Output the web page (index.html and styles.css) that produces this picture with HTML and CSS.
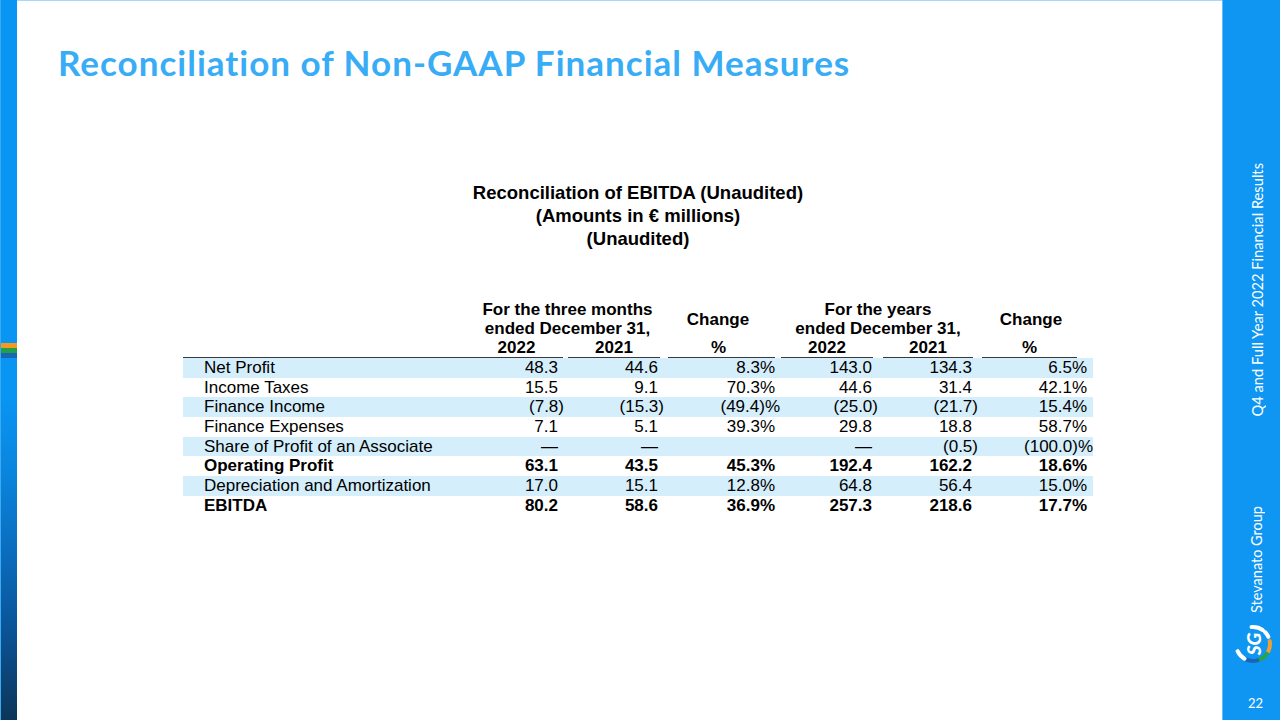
FILE: index.html
```html
<!DOCTYPE html>
<html lang="en">
<head>
<meta charset="utf-8">
<title>Reconciliation of Non-GAAP Financial Measures</title>
<link rel="stylesheet" href="styles.css">
</head>
<body>
<div class="slide">
  <aside class="leftbar">
    <div class="stripe orange"></div>
    <div class="stripe green"></div>
    <div class="stripe blue"></div>
  </aside>
  <main class="main">
    <h1 class="title">Reconciliation of Non-GAAP Financial Measures</h1>
    <section class="report">
      <div class="caption">
        <div>Reconciliation of EBITDA (Unaudited)</div>
        <div>(Amounts in € millions)</div>
        <div>(Unaudited)</div>
      </div>
      <div class="thead">
        <div class="grp g1">For the three months<br>ended December 31,</div>
        <div class="chg c1">Change</div>
        <div class="grp g2">For the years<br>ended December 31,</div>
        <div class="chg c2">Change</div>
        <div class="h3 lab"></div>
        <div class="h3 a">2022</div>
        <div class="h3 b">2021</div>
        <div class="h3 c">%</div>
        <div class="h3 d">2022</div>
        <div class="h3 e">2021</div>
        <div class="h3 f">%</div>
      </div>
      <div class="row shade"><span class="lab">Net Profit</span><span>48.3</span><span>44.6</span><span class="p">8.3%</span><span>143.0</span><span>134.3</span><span>6.5%</span></div>
      <div class="row"><span class="lab">Income Taxes</span><span>15.5</span><span>9.1</span><span class="p">70.3%</span><span>44.6</span><span>31.4</span><span>42.1%</span></div>
      <div class="row shade"><span class="lab">Finance Income</span><span><i class="neg">(7.8)</i></span><span><i class="neg">(15.3)</i></span><span class="p"><i class="neg">(49.4)%</i></span><span><i class="neg">(25.0)</i></span><span><i class="neg">(21.7)</i></span><span>15.4%</span></div>
      <div class="row"><span class="lab">Finance Expenses</span><span>7.1</span><span>5.1</span><span class="p">39.3%</span><span>29.8</span><span>18.8</span><span>58.7%</span></div>
      <div class="row shade"><span class="lab">Share of Profit of an Associate</span><span>—</span><span>—</span><span class="p"></span><span>—</span><span><i class="neg">(0.5)</i></span><span><i class="neg">(100.0)%</i></span></div>
      <div class="row bold"><span class="lab">Operating Profit</span><span>63.1</span><span>43.5</span><span class="p">45.3%</span><span>192.4</span><span>162.2</span><span>18.6%</span></div>
      <div class="row shade"><span class="lab">Depreciation and Amortization</span><span>17.0</span><span>15.1</span><span class="p">12.8%</span><span>64.8</span><span>56.4</span><span>15.0%</span></div>
      <div class="row bold"><span class="lab">EBITDA</span><span>80.2</span><span>58.6</span><span class="p">36.9%</span><span>257.3</span><span>218.6</span><span>17.7%</span></div>
    </section>
  </main>
  <aside class="rightbar">
    <div class="vtext event">Q4 and Full Year 2022 Financial Results</div>
    <div class="vtext brand">Stevanato Group</div>
    <svg class="logo" viewBox="0 0 38 44" width="38" height="44" aria-label="SG logo">
      <g fill="none" stroke-width="4" stroke-linecap="round">
        <path d="M16.5 4.1 A17 17 0 0 1 27.8 7.1" stroke="#ffffff"/>
        <path d="M30.0 9.0 A17 17 0 0 1 33.4 13.8" stroke="#ffffff"/>
        <path d="M34.7 18.1 A17 17 0 0 1 33.4 28.2" stroke="#f0a030"/>
        <path d="M31.9 30.8 A17 17 0 0 1 23.8 37.0" stroke="#2aa348"/>
        <path d="M22.4 37.4 A17 17 0 0 1 10.8 36.4" stroke="#1c64b8"/>
        <path d="M9.5 35.7 A17 17 0 0 1 2.6 28.2" stroke="#ffffff"/>
      </g>
      <text x="18" y="21" transform="rotate(-90 18 21)" text-anchor="middle" dominant-baseline="central" class="logotext">SG</text>
    </svg>
    <div class="pageno">22</div>
  </aside>
</div>
</body>
</html>
```
FILE: styles.css
```css
* { box-sizing: border-box; }
html, body { margin: 0; padding: 0; }
body { width: 1280px; height: 720px; overflow: hidden; background: #ffffff; }

.slide {
  display: flex;
  width: 1280px;
  height: 720px;
}

.leftbar {
  width: 17px;
  flex: none;
  display: flex;
  flex-direction: column;
  padding-top: 343px;
  background: linear-gradient(to bottom, #0995f4 0%, #0995f4 55%, #0a86df 65%, #0a6cbd 77%, #0b5295 88%, #0c3658 100%);
  border-left: 1px solid #3aaaf3;
}
.stripe { height: 5px; }
.orange { background: #f39a1e; }
.green { background: #20a04a; }
.blue { background: #1b66b3; }

.main {
  flex: 1;
  border-top: 1px solid #a8d9f7;
  padding-top: 40.5px;
}

.title {
  margin: 0 0 0 41px;
  font-family: Lato, "Open Sans", sans-serif;
  font-weight: 700;
  font-size: 35px;
  line-height: 40px;
  color: #38acf5;
  letter-spacing: 1px;
  font-variant-ligatures: none;
  white-space: nowrap;
}

.report {
  margin-left: 166px;
  width: 910px;
  font-family: "Liberation Sans", Arial, sans-serif;
  font-size: 17px;
  color: #000;
}

.caption {
  margin-top: 99.5px;
  text-align: center;
  font-weight: 700;
  font-size: 18.5px;
  line-height: 23px;
}

.thead, .row {
  display: grid;
  grid-template-columns: 287px 95px 100px 113px 100px 100px 115px;
}

.thead {
  margin-top: 50px;
  grid-template-rows: 19px 19px 20px;
  font-weight: 700;
  line-height: 19px;
  text-align: center;
}
.grp { grid-row: 1 / 3; }
.g1 { grid-column: 2 / 4; }
.g2 { grid-column: 5 / 7; }
.chg { grid-row: 1 / 3; align-self: center; }
.c1 { grid-column: 4; padding-right: 7px; }
.c2 { grid-column: 7; padding-right: 9px; }

.h3 { grid-row: 3; border-bottom: 1px solid #3a3a3a; height: 20px; }
.h3.lab { grid-column: 1; }
.h3.a { grid-column: 2; margin-right: 2px; }
.h3.b { grid-column: 3; margin: 0 5px 0 3px; }
.h3.c { grid-column: 4; margin: 0 3px; padding-right: 6px; }
.h3.d { grid-column: 5; margin: 0 5px 0 3px; }
.h3.e { grid-column: 6; margin: 0 5px; }
.h3.f { grid-column: 7; margin: 0 16px 0 4px; }

.row {
  height: 19.7px;
  line-height: 19.7px;
  text-align: right;
  white-space: nowrap;
}
.row.shade { background: #d4eefb; }
.row.bold { font-weight: 700; }
.row > span { padding-right: 6px; }
.row > span:nth-child(2) { padding-right: 7px; }
.row > span:nth-child(3) { padding-right: 7px; }
.row > span.p { padding-right: 3px; }
.row > span.lab { text-align: left; padding-left: 21px; padding-right: 0; }
.neg { font-style: normal; margin-right: -6px; }
.p .neg { margin-right: -5px; }

.rightbar {
  width: 58px;
  flex: none;
  background: #0e96f2;
  border-left: 1px solid #62bdf6;
  display: flex;
  flex-direction: column;
  align-items: flex-start;
  color: #ffffff;
  font-family: Lato, "Open Sans", sans-serif;
}

.vtext {
  writing-mode: vertical-rl;
  transform: rotate(180deg);
  white-space: nowrap;
}
.event {
  margin-top: 163px;
  margin-left: 25px;
  font-size: 14.7px;
  line-height: 18px;
}
.brand {
  margin-top: 89px;
  margin-left: 24px;
  font-size: 14.5px;
  line-height: 20px;
}
.logo {
  margin-top: 11px;
  margin-left: 12px;
  display: block;
}
.logotext {
  fill: #ffffff;
  font-family: Lato, "Open Sans", sans-serif;
  font-weight: 900;
  font-size: 19px;
  font-style: italic;
}
.pageno {
  margin-top: 28px;
  margin-left: 25px;
  font-size: 13px;
  line-height: 16px;
}
```
